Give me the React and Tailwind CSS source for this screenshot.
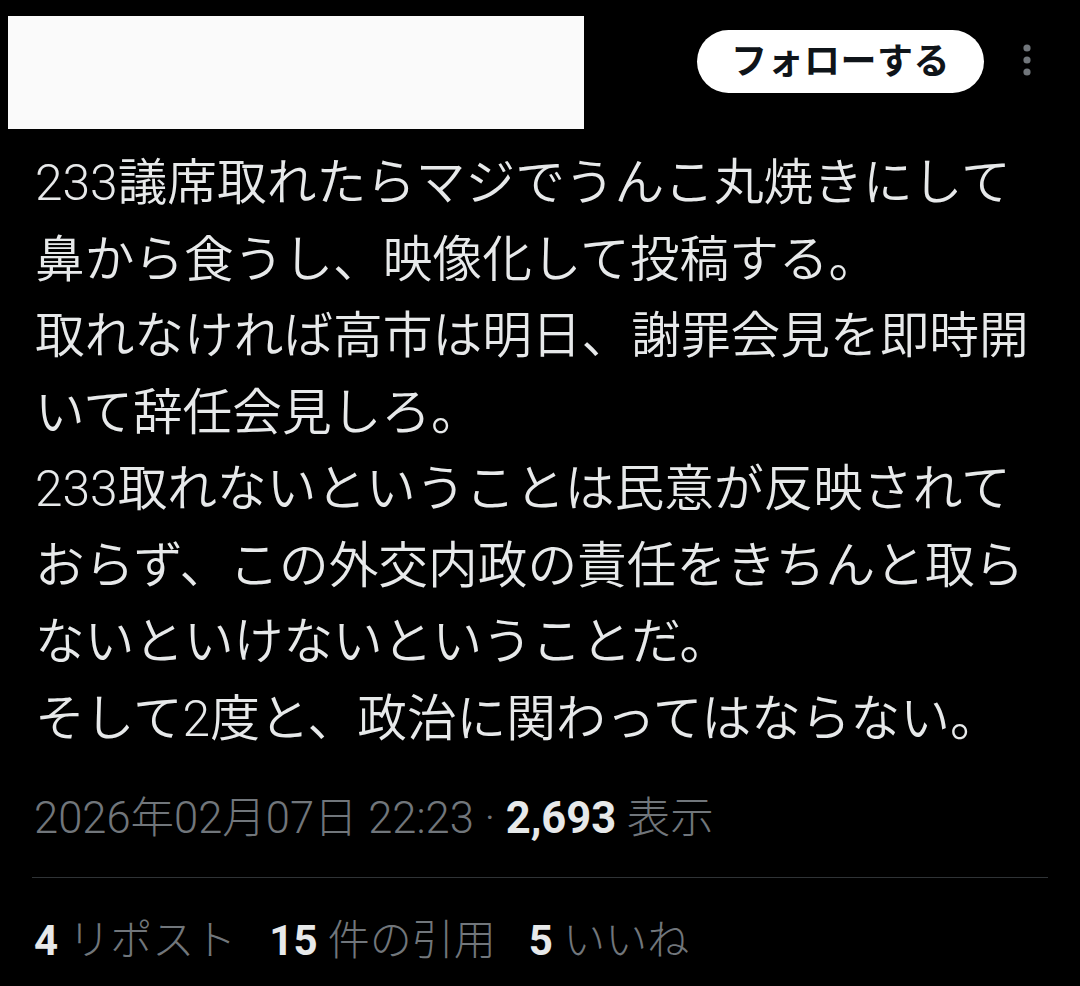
import React from "react";

const lines = [
  "233議席取れたらマジでうんこ丸焼きにして",
  "鼻から食うし、映像化して投稿する。",
  "取れなければ高市は明日、謝罪会見を即時開",
  "いて辞任会見しろ。",
  "233取れないということは民意が反映されて",
  "おらず、この外交内政の責任をきちんと取ら",
  "ないといけないということだ。",
  "そして2度と、政治に関わってはならない。",
];

const stats = [
  { value: "4", label: "リポスト" },
  { value: "15", label: "件の引用" },
  { value: "5", label: "いいね" },
];

const MoreIcon = () => (
  <svg width="10" height="34" viewBox="0 0 10 34" className="fill-[#71767b]">
    <circle cx="5" cy="5" r="3.6" />
    <circle cx="5" cy="17" r="3.6" />
    <circle cx="5" cy="29" r="3.6" />
  </svg>
);

export default function App() {
  return (
    <div
      className="w-[1080px] h-[986px] overflow-hidden bg-black text-[#e7e9ea]"
      style={{ fontFamily: 'Roboto, "Noto Sans CJK JP", sans-serif' }}
    >
      {/* header */}
      <div className="flex items-start pt-4 pl-2 pr-[48px]">
        <div className="w-[576px] h-[113px] bg-[#fafafa]" />
        <button className="ml-auto mt-[14px] w-[287px] h-[63px] rounded-full bg-white text-[#0f1419] text-[36px] font-bold flex items-center justify-center tracking-[0.5px]">
          フォローする
        </button>
        <div className="ml-[38px] mt-[27px]">
          <MoreIcon />
        </div>
      </div>

      {/* body */}
      <div className="mt-[16px] pl-[35px] text-[49.7px] leading-[76.5px] font-[350] whitespace-nowrap">
        {lines.map((line) => (
          <div key={line}>{line}</div>
        ))}
      </div>

      {/* meta */}
      <div className="mt-[37px] pl-[34px] text-[43.5px] leading-[50px] font-light text-[#71767b] whitespace-nowrap">
        2026年02月07日 22:23 ·{" "}
        <span className="font-bold text-[#e7e9ea]">2,693</span> 表示
      </div>

      <div className="mt-[33px] mx-[32px] h-px bg-[#2f3336]" />

      <div className="mt-[38px] pl-[34px] flex gap-[33px] text-[42px] leading-[50px] font-light whitespace-nowrap">
        {stats.map((s) => (
          <div key={s.label}>
            <span className="font-bold text-[#e7e9ea]">{s.value}</span>{" "}
            <span className="text-[#71767b]">{s.label}</span>
          </div>
        ))}
      </div>
    </div>
  );
}
